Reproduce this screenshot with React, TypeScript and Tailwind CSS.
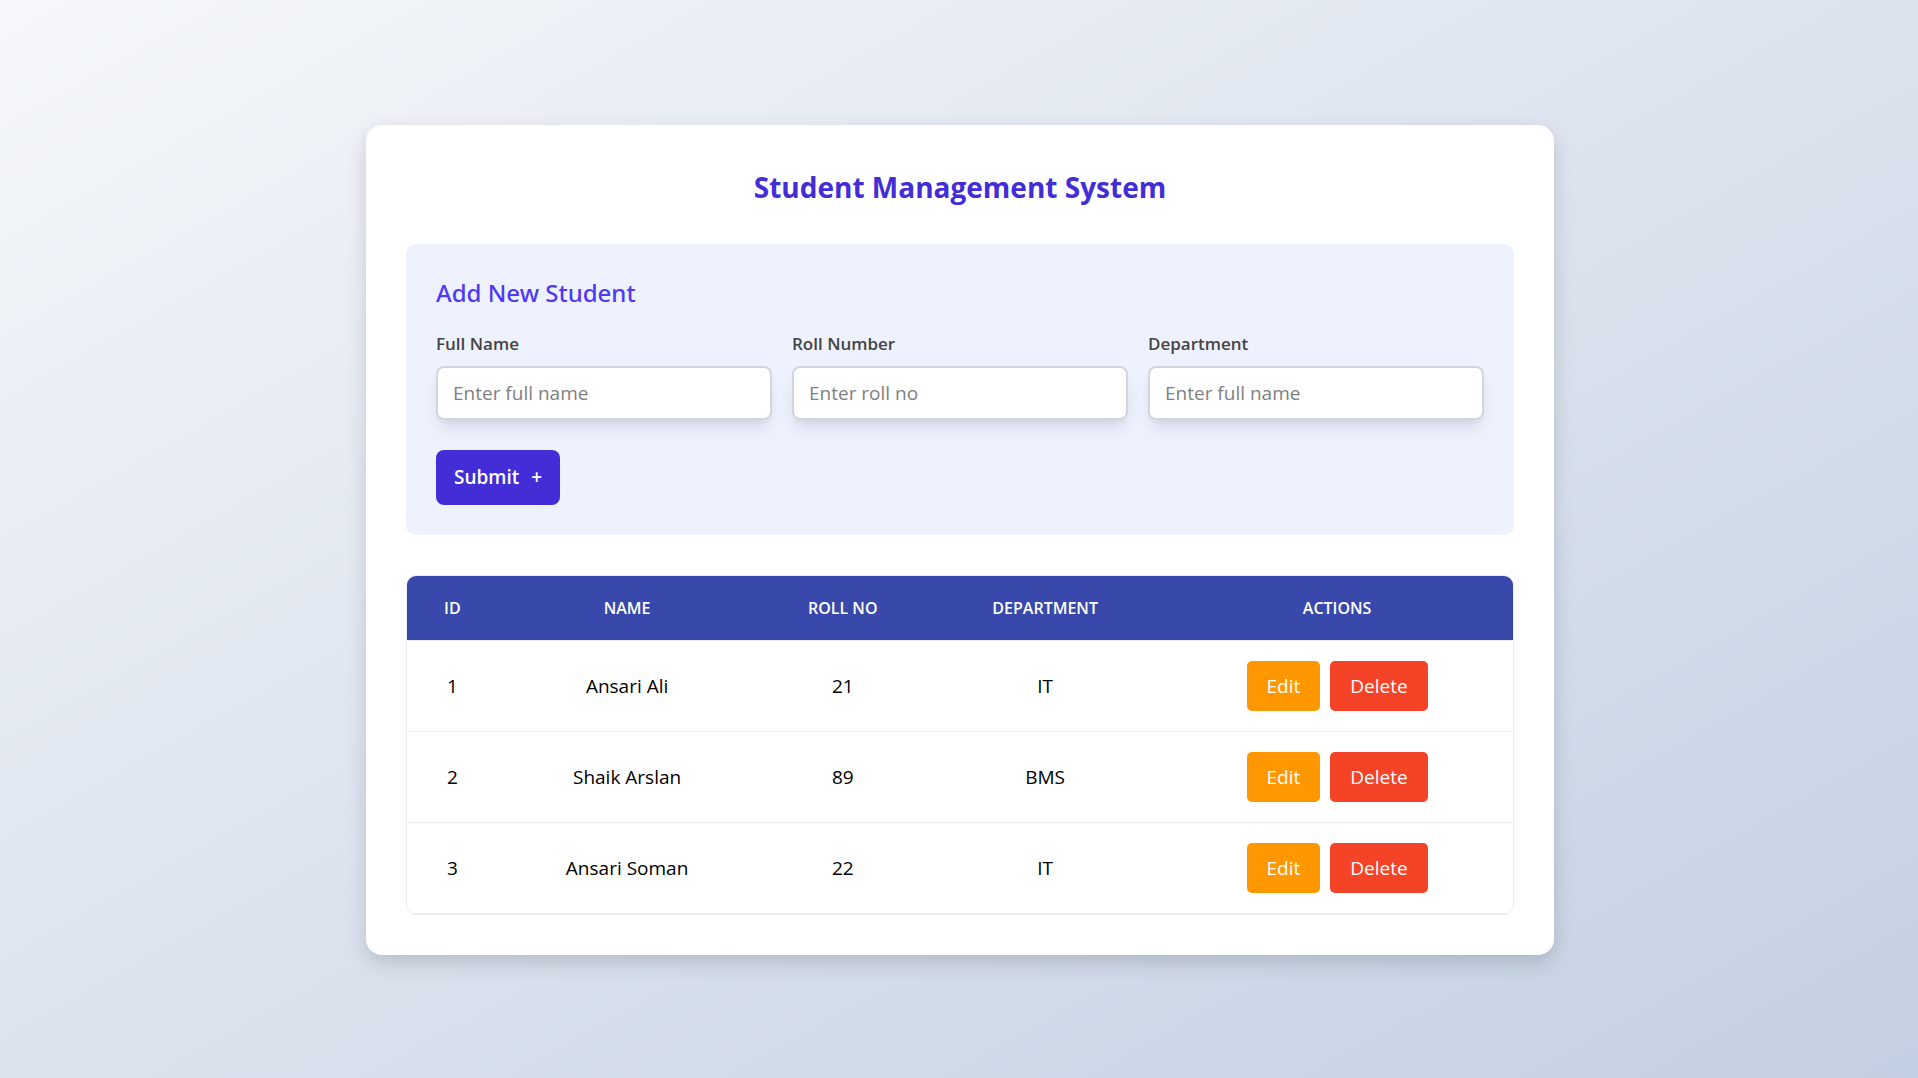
import React from "react";

type Student = { id: number; name: string; roll: string; department: string };

const students: Student[] = [
  { id: 1, name: "Ansari Ali", roll: "21", department: "IT" },
  { id: 2, name: "Shaik Arslan", roll: "89", department: "BMS" },
  { id: 3, name: "Ansari Soman", roll: "22", department: "IT" },
];

const fields = [
  { id: "full-name", label: "Full Name", placeholder: "Enter full name" },
  { id: "roll-number", label: "Roll Number", placeholder: "Enter roll no" },
  { id: "department", label: "Department", placeholder: "Enter full name" },
];

const columns = [
  { title: "ID", width: "w-[8.2%]" },
  { title: "Name", width: "w-[23.4%]" },
  { title: "Roll No", width: "w-[15.6%]" },
  { title: "Department", width: "w-[21%]" },
  { title: "Actions", width: "w-[31.8%]" },
];

function Field({ id, label, placeholder }: { id: string; label: string; placeholder: string }) {
  return (
    <div className="flex flex-col gap-2.5">
      <label htmlFor={id} className="text-[17px] leading-6 font-semibold text-[#444444]">
        {label}
      </label>
      <input
        id={id}
        type="text"
        placeholder={placeholder}
        className="h-[54px] w-full rounded-lg border-2 border-gray-300 bg-white px-[15px] text-[19px] text-black shadow-[0_12px_19px_-4px_rgba(0,0,0,0.1),0_5px_8px_-5px_rgba(0,0,0,0.1)] outline-none placeholder:text-[#808080]"
      />
    </div>
  );
}

function StudentForm() {
  return (
    <form className="rounded-[10px] bg-indigo-50 p-[30px]" onSubmit={(e) => e.preventDefault()}>
      <h2 className="mb-5 font-['Noto_Sans',sans-serif] text-2xl leading-[38px] font-medium text-indigo-600">
        Add New Student
      </h2>
      <div className="grid grid-cols-3 gap-5">
        {fields.map((field) => (
          <Field key={field.id} {...field} />
        ))}
      </div>
      <button
        type="submit"
        className="mt-[30px] flex h-[55px] items-center gap-3 rounded-lg bg-indigo-700 px-[18px] text-[19px] font-semibold text-white"
      >
        Submit <span>+</span>
      </button>
    </form>
  );
}

function StudentTable() {
  return (
    <div className="overflow-hidden rounded-[10px] border border-[#eeeeee]">
      <table className="w-full table-fixed text-center">
        <thead className="bg-[#3949ab] text-white">
          <tr className="border-b border-[#eeeeee]">
            {columns.map(({ title, width }) => (
              <th key={title} scope="col" className={`${width} h-[65px] text-base font-semibold uppercase`}>
                {title}
              </th>
            ))}
          </tr>
        </thead>
        <tbody className="text-[19px] text-black">
          {students.map((student) => (
            <tr key={student.id} className="h-[91px] border-b border-[#eeeeee]">
              <td>{student.id}</td>
              <td>{student.name}</td>
              <td>{student.roll}</td>
              <td>{student.department}</td>
              <td>
                <div className="flex justify-center gap-2.5">
                  <button type="button" className="h-[50px] rounded-[5px] bg-[#ff9800] px-5 text-white">
                    Edit
                  </button>
                  <button type="button" className="h-[50px] rounded-[5px] bg-[#f44327] px-5 text-white">
                    Delete
                  </button>
                </div>
              </td>
            </tr>
          ))}
        </tbody>
      </table>
    </div>
  );
}

export default function App() {
  return (
    <div className="flex min-h-screen items-center justify-center bg-linear-to-br from-[#f5f7fa] to-[#c3cfe2] pt-0.5 pl-0.5 font-['Open_Sans',sans-serif]">
      <main className="w-full max-w-[1188px] rounded-2xl bg-white p-10 shadow-[0_8px_20px_rgba(0,0,0,0.15)]">
        <h1 className="mb-[34px] text-center text-[28px] leading-[45px] font-bold text-indigo-700">
          Student Management System
        </h1>
        <div className="flex flex-col gap-10">
          <StudentForm />
          <StudentTable />
        </div>
      </main>
    </div>
  );
}
